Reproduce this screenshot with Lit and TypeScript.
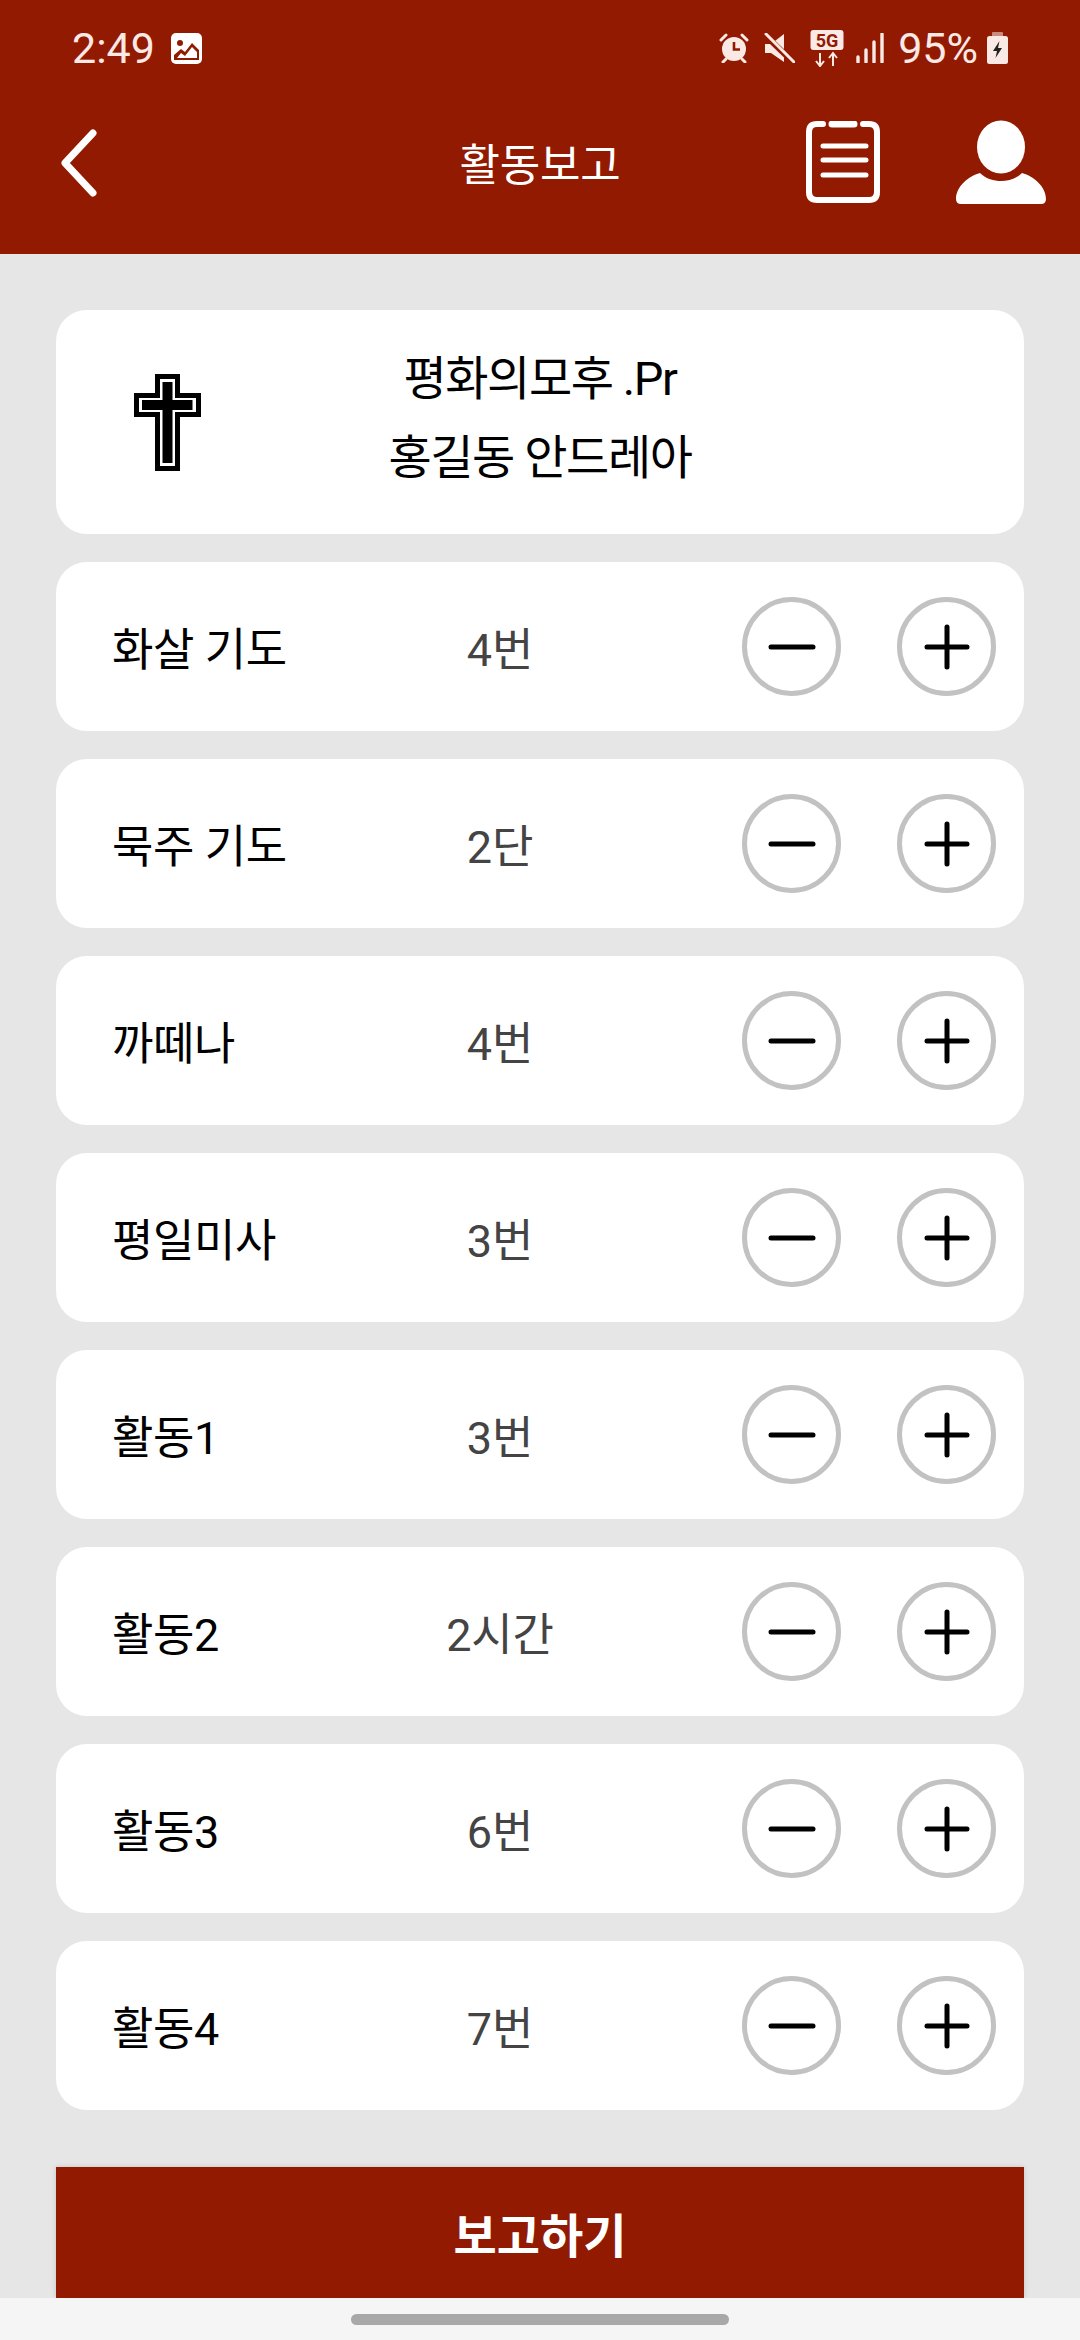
import { LitElement, html, css, svg } from 'lit';
import { customElement, state } from 'lit/decorators.js';

type Row = { name: string; count: number; unit: string };

const RED = '#921a00';

@customElement('app-root')
export class AppRoot extends LitElement {
  @state() rows: Row[] = [
    { name: '화살 기도', count: 4, unit: '번' },
    { name: '묵주 기도', count: 2, unit: '단' },
    { name: '까떼나', count: 4, unit: '번' },
    { name: '평일미사', count: 3, unit: '번' },
    { name: '활동1', count: 3, unit: '번' },
    { name: '활동2', count: 2, unit: '시간' },
    { name: '활동3', count: 6, unit: '번' },
    { name: '활동4', count: 7, unit: '번' },
  ];

  static styles = css`
    :host {
      display: block;
      width: 1080px;
      height: 2340px;
      overflow: hidden;
      background: #e6e6e6;
      font-family: Roboto, 'Noto Sans CJK KR', sans-serif;
      color: #000;
    }
    .top {
      height: 254px;
      background: #921a00;
      color: #fff;
      display: flex;
      flex-direction: column;
    }
    .status {
      height: 96px;
      display: flex;
      align-items: center;
      padding: 0 72px 0 72px;
      font-family: Roboto, sans-serif;
      font-size: 43px;
      color: #fbe9e5;
    }
    .status svg {
      display: block;
      flex: none;
    }
    .time {
      margin-right: 16px;
    }
    .spacer {
      flex: 1;
    }
    .status .icons {
      display: flex;
      align-items: center;
    }
    .pct {
      margin: 0 9px 0 14px;
    }
    .nav {
      display: grid;
      grid-template-columns: 1fr auto 1fr;
      align-items: center;
      height: 132px;
      padding: 0 34px;
    }
    .back {
      display: block;
      margin: 2px 0 0 26px;
      filter: blur(0.5px);
    }
    .title {
      font-size: 44px;
      letter-spacing: -0.2px;
    }
    .nav-right {
      display: flex;
      justify-content: flex-end;
      align-items: center;
      gap: 76px;
    }
    main {
      padding: 56px 56px 0;
      display: flex;
      flex-direction: column;
      gap: 28px;
    }
    .card {
      background: #fff;
      border-radius: 31px;
    }
    .profile {
      height: 224px;
      display: grid;
      grid-template-columns: 78px 67px 1fr 145px;
      align-items: center;
    }
    .profile svg {
      grid-column: 2;
      display: block;
    }
    .who {
      grid-column: 3;
      text-align: center;
      font-size: 47px;
      line-height: 79px;
      letter-spacing: -1.4px;
      margin-top: -8px;
    }
    .row {
      height: 169px;
      display: grid;
      grid-template-columns: 288px 200px 1fr;
      align-items: center;
      padding: 0 28px 0 56px;
    }
    .name {
      font-size: 45px;
      letter-spacing: -0.4px;
    }
    .value {
      font-size: 45px;
      text-align: center;
      color: #444;
      letter-spacing: -0.2px;
    }
    .controls {
      display: flex;
      justify-content: flex-end;
      gap: 56px;
    }
    .round {
      width: 99px;
      height: 99px;
      padding: 0;
      border: 5px solid #c2c2c2;
      border-radius: 50%;
      background: #fff;
      display: flex;
      align-items: center;
      justify-content: center;
    }
    .report {
      display: block;
      width: 968px;
      height: 131px;
      margin: 57px 56px 0;
      padding: 0;
      border: 0;
      background: #921a00;
      color: #fff;
      font-family: inherit;
      font-size: 47px;
      font-weight: 700;
      box-shadow: 0 0 5px rgba(0, 0, 0, 0.15);
    }
    .home {
      height: 42px;
      background: #f5f5f6;
      display: flex;
      justify-content: center;
      padding-top: 16px;
      box-sizing: border-box;
      position: relative;
    }
    .pill {
      width: 378px;
      height: 11px;
      border-radius: 6px;
      background: #a8a8a8;
    }
  `;

  change(i: number, d: number) {
    this.rows = this.rows.map((r, n) =>
      n === i ? { ...r, count: Math.max(0, r.count + d) } : r
    );
  }

  statusIcons() {
    return html`
      <svg width="30" height="30" viewBox="0 0 30 30" style="margin-right:15px">
        <circle cx="15" cy="16" r="12" fill="#fbe9e5" />
        <path d="M2 7l5-5M28 7l-5-5M7 26l-3 3M23 26l3 3" stroke="#fbe9e5" stroke-width="3" stroke-linecap="round" />
        <path d="M15 9v7.5h6" fill="none" stroke="${RED}" stroke-width="2.6" />
      </svg>
      <svg width="31" height="30" viewBox="0 0 31 30" style="margin-right:15px">
        <path d="M1 11h6L20 1v28L7 20H1z" fill="#fbe9e5" />
        <path d="M0 1l29 28" stroke="${RED}" stroke-width="6" />
        <path d="M2 1l28 28" stroke="#fbe9e5" stroke-width="3" stroke-linecap="round" />
      </svg>
      <svg width="34" height="37" viewBox="0 0 34 37" style="margin-right:12px">
        <rect x="0.5" y="0" width="33" height="20" rx="3" fill="#fbe9e5" />
        <text x="17" y="16.5" text-anchor="middle" font-family="Roboto, sans-serif" font-size="18" font-weight="700" fill="${RED}">5G</text>
        <path d="M10 23v13M6 31l4 5 4-5M23 36V23M19 28l4-5 4 5" fill="none" stroke="#fbe9e5" stroke-width="2" />
      </svg>
      <svg width="28" height="30" viewBox="0 0 28 30">
        <path d="M2 24v5M10 17v12M18 9v20M26 1v28" stroke="#fbe9e5" stroke-width="3.4" stroke-linecap="round" />
      </svg>
      <span class="pct">95%</span>
      <svg width="21" height="32" viewBox="0 0 21 32">
        <rect x="5" y="0" width="11" height="5" rx="1" fill="#c98b7d" />
        <rect x="0" y="4" width="21" height="28" rx="2.5" fill="#fbe9e5" />
        <path d="M12.5 9L6 19h4l-1.5 7L15 16h-4z" fill="#222" />
      </svg>
    `;
  }

  render() {
    return html`
      <div class="top">
        <div class="status">
          <span class="time">2:49</span>
          <svg width="31" height="31" viewBox="0 0 31 31">
            <rect width="31" height="31" rx="5" fill="#fff" />
            <circle cx="9" cy="10" r="3" fill="${RED}" />
            <path d="M3 27v-5l7-6 4 3 7-9 7 7v10z" fill="${RED}" />
            <path d="M6 25l4-5 4 3 7-9 5 5v6z" fill="#fff" />
          </svg>
          <span class="spacer"></span>
          <span class="icons">${this.statusIcons()}</span>
        </div>
        <div class="nav">
          <svg class="back" width="38" height="68" viewBox="0 0 38 68">
            <path d="M33 4L5 34l28 30" fill="none" stroke="#fff" stroke-width="7" stroke-linecap="round" stroke-linejoin="round" />
          </svg>
          <span class="title">활동보고</span>
          <div class="nav-right">
            <svg width="74" height="82" viewBox="0 0 74 82">
              <path d="M17 3H11Q3 3 3 11v60q0 8 8 8h52q8 0 8-8V11q0-8-8-8h-6" fill="none" stroke="#fff" stroke-width="6" stroke-linecap="round" />
              <path d="M26 3h22" stroke="#fff" stroke-width="7" stroke-linecap="round" />
              <path d="M17 25h43M17 39h43M17 54h43" stroke="#fff" stroke-width="5" stroke-linecap="round" />
            </svg>
            <svg width="90" height="84" viewBox="0 0 90 84">
              <ellipse cx="45" cy="27" rx="24" ry="26.5" fill="#fff" />
              <path d="M24 53c6 6 14 8 21 8s15-2 21-8c12 3 24 14 24 26q0 5-5 5H5q-5 0-5-5c0-12 12-23 24-26z" fill="#fff" />
            </svg>
          </div>
        </div>
      </div>
      <main>
        <div class="card profile">
          <svg width="67" height="97" viewBox="0 0 67 97">
            <path d="M23.5 2.5h20v19h21v19h-21v54h-20v-54h-21v-19h21z" fill="#fff" stroke="#000" stroke-width="5" />
            <path d="M28.5 8h10v18h20v10h-20v53h-10V36H8V26h20.5z" fill="#000" />
          </svg>
          <div class="who">평화의모후 .Pr<br />홍길동 안드레아</div>
        </div>
        ${this.rows.map(
          (r, i) => html`
            <div class="card row">
              <span class="name">${r.name}</span>
              <span class="value">${r.count}${r.unit}</span>
              <div class="controls">
                <button class="round" @click=${() => this.change(i, -1)}>
                  <svg width="50" height="50" viewBox="0 0 50 50">
                    ${svg`<path d="M4 25h42" stroke="#000" stroke-width="5" stroke-linecap="round" />`}
                  </svg>
                </button>
                <button class="round" @click=${() => this.change(i, 1)}>
                  <svg width="50" height="50" viewBox="0 0 50 50">
                    ${svg`<path d="M5 25h40M25 5v40" stroke="#000" stroke-width="5" stroke-linecap="round" />`}
                  </svg>
                </button>
              </div>
            </div>
          `
        )}
      </main>
      <button class="report">보고하기</button>
      <div class="home"><span class="pill"></span></div>
    `;
  }
}
